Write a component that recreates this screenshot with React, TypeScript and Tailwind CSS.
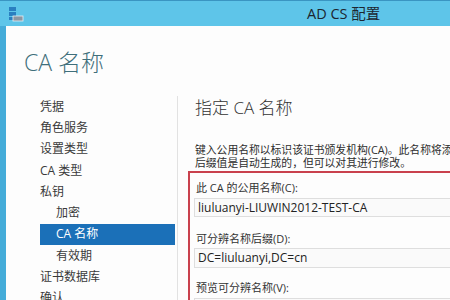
import React from "react";

const font = { fontFamily: '"Open Sans", "Noto Sans CJK SC", sans-serif' };

const navItems = [
  { label: "凭据", sub: false },
  { label: "角色服务", sub: false },
  { label: "设置类型", sub: false },
  { label: "CA 类型", sub: false },
  { label: "私钥", sub: false },
  { label: "加密", sub: true },
  { label: "CA 名称", sub: true, active: true },
  { label: "有效期", sub: true },
  { label: "证书数据库", sub: false },
  { label: "确认", sub: false },
];

function ServerIcon() {
  return (
    <svg width="16" height="16" viewBox="0 0 16 16" className="absolute left-[8px] top-[5px]">
      <rect x="1" y="1" width="7" height="4" fill="#2a7fc0" />
      <rect x="1" y="6" width="7" height="4" fill="#2a7fc0" />
      <rect x="1" y="11" width="4" height="3" fill="#2a7fc0" />
      <rect x="5" y="10" width="10" height="5" fill="#8a97a3" stroke="#e8eef2" strokeWidth="0.8" />
    </svg>
  );
}

export default function App() {
  return (
    <div
      className="w-[450px] h-[300px] overflow-hidden flex flex-col bg-[#5ec5e9] border-t border-[#3a95c2]"
      style={font}
    >
      <div className="h-[25px] relative flex items-center shrink-0">
        <ServerIcon />
        <span className="pl-[307px] text-[14.5px] text-[#1c2630] whitespace-nowrap">
          AD CS 配置
        </span>
      </div>
      <div className="flex-1 flex min-h-0">
        <div className="w-[6px] bg-[#45acd9] shrink-0" />
        <div className="flex-1 bg-[#fdfdfd] flex flex-col min-w-0">
          <div className="pt-[22px] pl-[18px] text-[23px] leading-[28px] font-light text-[#3f6f7b] whitespace-nowrap">
            CA 名称
          </div>
          <div className="mt-[20px] flex flex-1 min-h-0">
            <div className="w-[171px] shrink-0">
              {navItems.map((item) => (
                <div
                  key={item.label}
                  className={`ml-[34px] w-[135px] h-[21.3px] flex items-center text-[12px] whitespace-nowrap ${
                    item.sub ? "pl-[16px]" : ""
                  } ${item.active ? "bg-[#1b70b8] text-white" : "text-[#3a3a3a]"}`}
                >
                  {item.label}
                </div>
              ))}
            </div>
            <div className="flex-1 border-l border-[#e2e2e2] min-w-0">
              <div className="pl-[17px] text-[17px] leading-[24px] font-light text-[#333] whitespace-nowrap">
                指定 CA 名称
              </div>
              <div className="mt-[23px] pl-[17px] text-[10.8px] leading-[13px] text-[#2e2e2e] whitespace-nowrap overflow-hidden">
                <div>键入公用名称以标识该证书颁发机构(CA)。此名称将添加到由该 CA 颁发的所有证书中。可分辨名称</div>
                <div>后缀值是自动生成的，但可以对其进行修改。</div>
              </div>
              <div className="mt-[2px] ml-[10px] border-2 border-r-0 border-b-0 border-[#c9414d] pt-[8px] pl-[4px] text-[11px] text-[#333]">
                <div className="pl-[2px] leading-[14px] whitespace-nowrap">此 CA 的公用名称(C):</div>
                <div className="mt-[3px] h-[19px] border border-r-0 border-[#dedede] bg-[#fafafa] pl-[3px] flex items-center text-[12px] text-[#222] whitespace-nowrap">
                  liuluanyi-LIUWIN2012-TEST-CA
                </div>
                <div className="mt-[15px] pl-[2px] leading-[14px] whitespace-nowrap">可分辨名称后缀(D):</div>
                <div className="mt-[2px] h-[20px] border border-r-0 border-[#dedede] bg-[#fafafa] pl-[3px] flex items-center text-[12px] text-[#222] whitespace-nowrap">
                  DC=liuluanyi,DC=cn
                </div>
                <div className="mt-[13px] pl-[2px] leading-[14px] whitespace-nowrap">预览可分辨名称(V):</div>
                <div className="mt-[3px] h-[40px] border border-r-0 border-[#dedede] bg-[#fafafa]" />
              </div>
            </div>
          </div>
        </div>
      </div>
    </div>
  );
}
